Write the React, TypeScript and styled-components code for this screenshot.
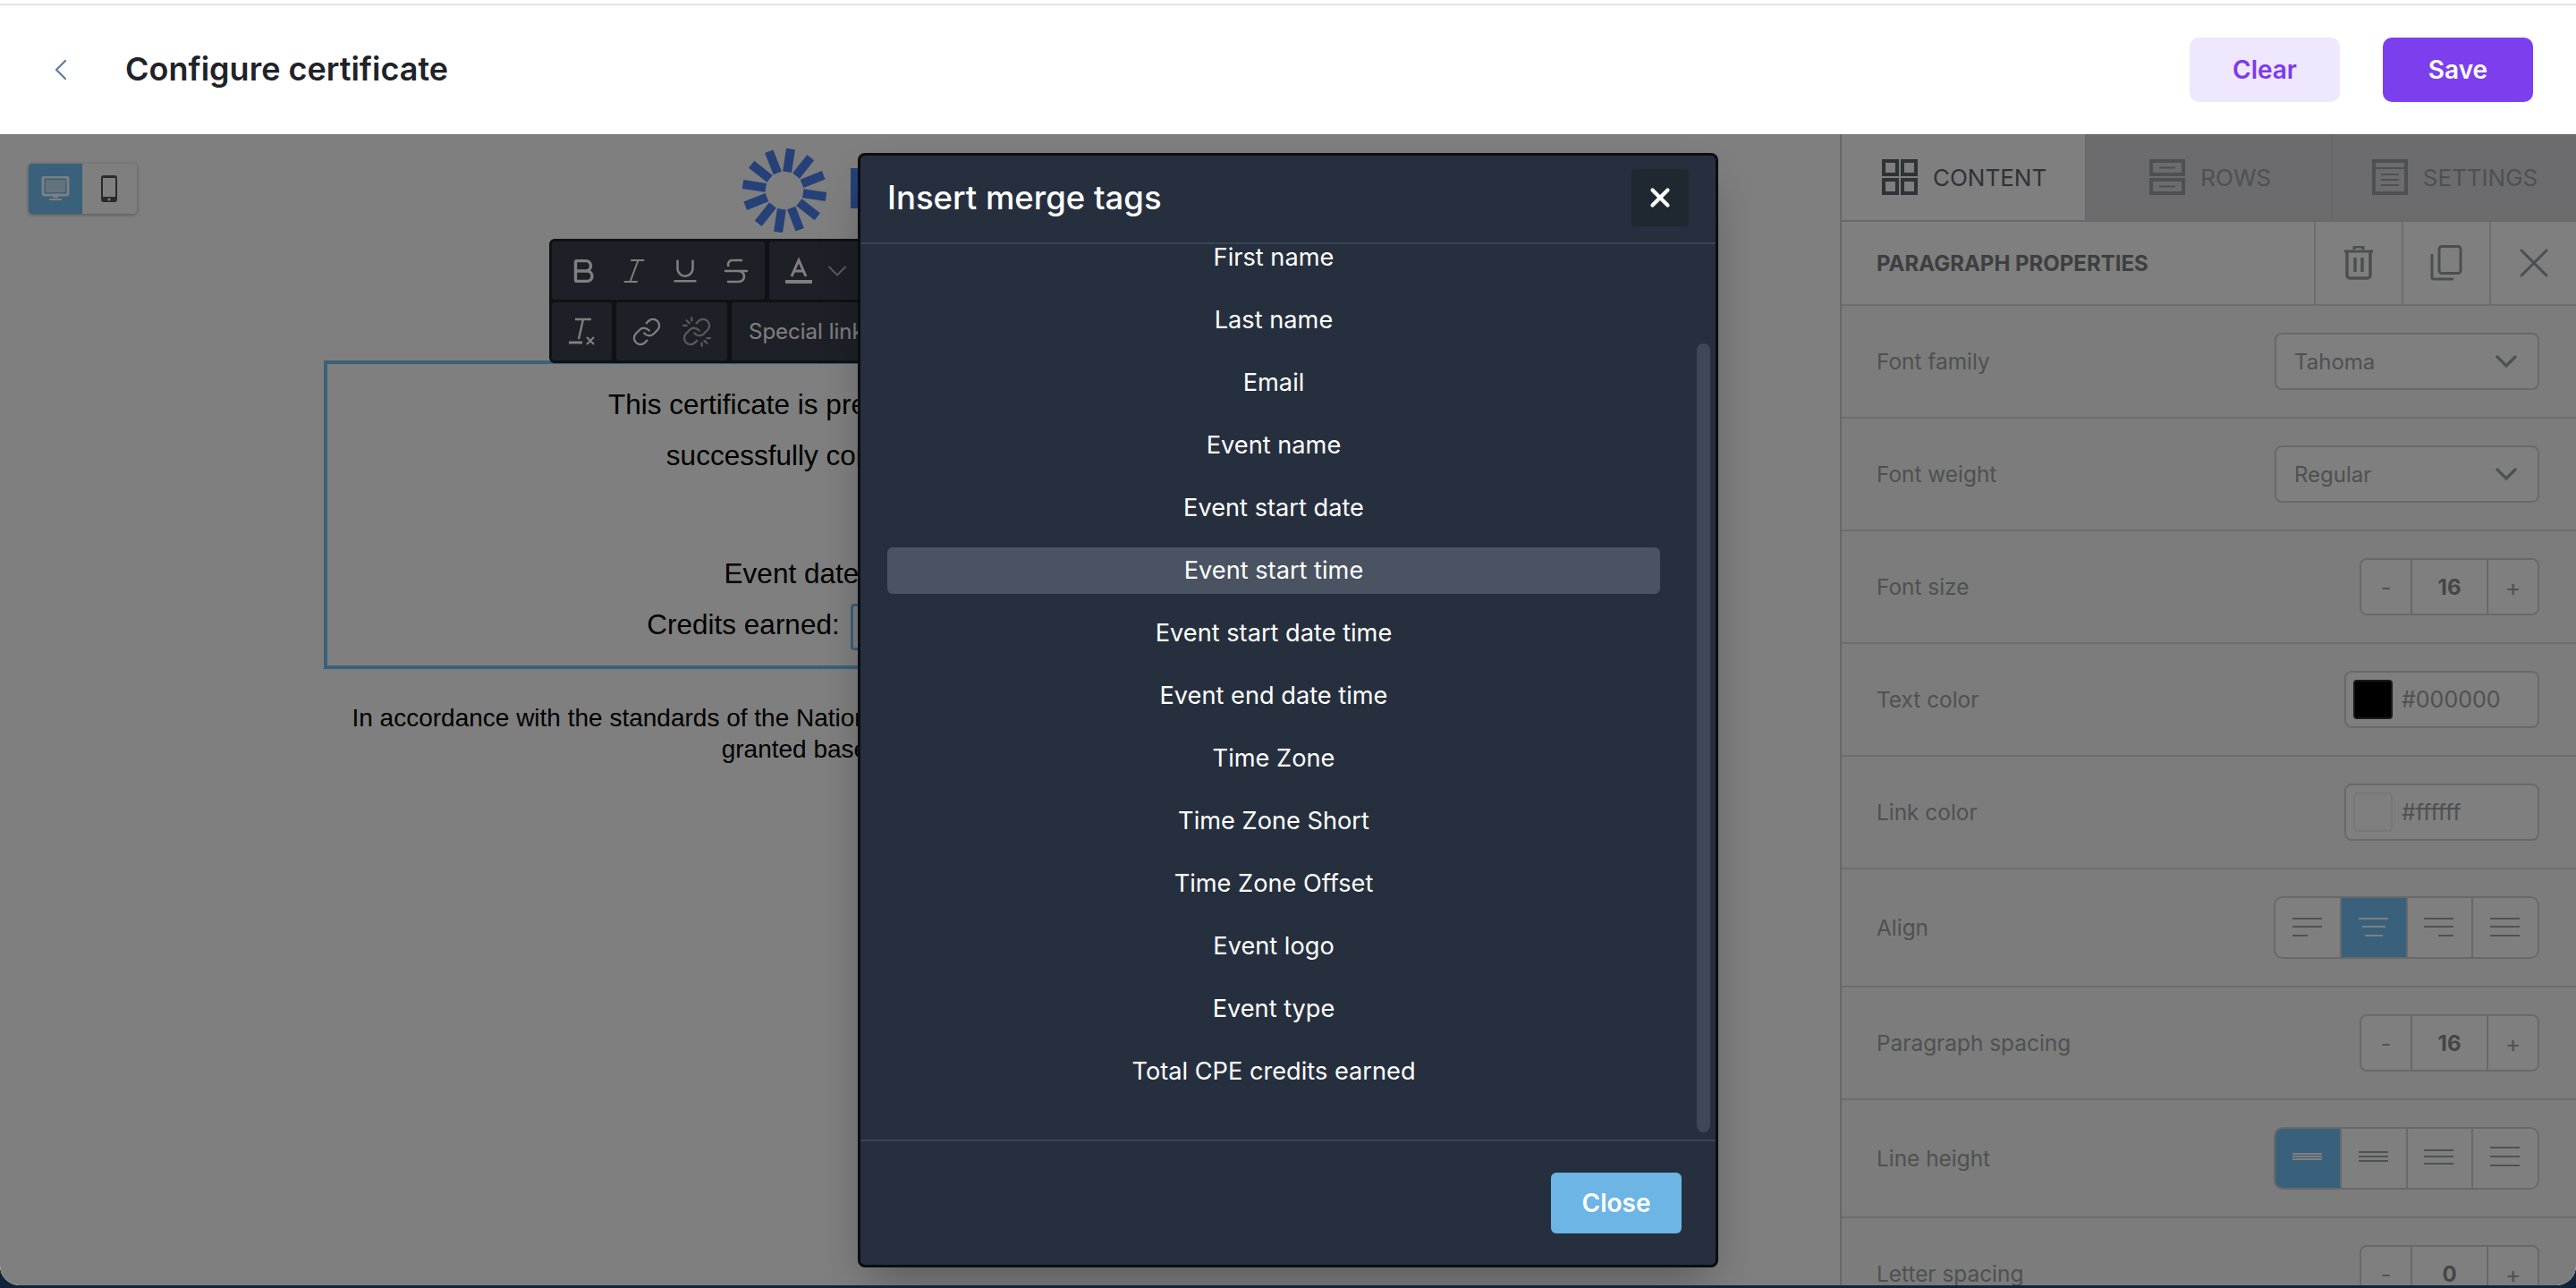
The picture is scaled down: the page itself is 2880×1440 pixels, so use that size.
import React from 'react';
import styled, { createGlobalStyle } from 'styled-components';
import { Bold, Italic, Underline, Strikethrough, ChevronDown, ChevronLeft, Link, X } from 'lucide-react';

const Global = createGlobalStyle`
  html, body { margin: 0; padding: 0; width: 2880px; height: 1440px; overflow: hidden; background: #11253a; }
  * { box-sizing: border-box; }
  body { font-family: Inter, "Liberation Sans", sans-serif; }
`;

const accent = '#72c2f6';
const line = '#d8dadb';
const dimText = '#9ea2a3';

const Page = styled.div`
  width: 2880px; height: 1437px; display: flex; flex-direction: column;
  background: #fff; overflow: hidden; border-radius: 0 0 22px 22px;
`;
const TopBar = styled.header`
  flex: none; display: flex; align-items: center; padding: 0 48px;
  border-top: 2px solid #e4e4e4; margin-top: 4px; height: 146px;
`;
const BackButton = styled.span`display: flex; color: #5b7aa6; width: 92px;`;
const Title = styled.h1`margin: 0 0 3px; font-size: 36px; font-weight: 600; color: #1f2329; flex: 1;`;
const TopButton = styled.button<{ $primary?: boolean }>`
  width: 168px; height: 72px; border: 0; border-radius: 10px; font: 600 28px Inter, sans-serif;
  margin-left: 48px; color: ${p => (p.$primary ? '#fff' : '#7c3aed')};
  background: ${p => (p.$primary ? '#7c3fee' : '#efe7fc')};
`;
const Workspace = styled.div`flex: 1; min-height: 0; display: flex; position: relative; overflow: hidden;`;
const Canvas = styled.main`flex: 1; padding-top: 16px; position: relative; min-width: 0; background: #fff;`;
const Logo = styled.svg`display: block; margin: 0 auto 143px; width: 398px; height: 94px;`;
const DeviceSwitch = styled.div`
  position: absolute; left: 32px; top: 33px; width: 121px; height: 56px; display: flex; background: #fff;
  border-radius: 4px; overflow: hidden; box-shadow: 0 1px 4px rgba(0,0,0,.35);
`;
const DeviceCell = styled.span<{ $on?: boolean }>`
  width: 60px; display: flex; align-items: center; justify-content: center; background: ${p => (p.$on ? accent : 'transparent')};
`;
const Selected = styled.section`
  width: 1334px; margin: 0 auto; border: 4px solid ${accent}; padding: 17px 0 17px; text-align: center;
  font: 31.5px/57px "Liberation Sans", sans-serif; color: #000;
`;
const Para = styled.p<{ $gap?: number }>`margin: 0 0 ${p => p.$gap ?? 0}px;`;
const Chip = styled.span`
  display: inline-block; width: 383px; height: 52px; vertical-align: middle; border: 3px solid ${accent}; border-radius: 4px;
  margin-left: 12px; font-size: 28px; line-height: 46px;
`;
const Legal = styled.p`
  margin: 37px 0 0; text-align: center; font: 28px/35px "Liberation Sans", sans-serif; color: #000;
`;
const Toolbar = styled.div`
  position: absolute; left: 614px; top: 117px; width: 560px; height: 139px; padding: 3px; border-radius: 6px;
  background: #1e2228; display: flex; flex-direction: column; gap: 3px;
`;
const ToolRow = styled.div`display: flex; gap: 5px; height: 66px;`;
const ToolGroup = styled.div<{ $w: number; $pad?: number }>`
  width: ${p => p.$w}px; padding-left: ${p => p.$pad ?? 0}px; background: #3a424f; border-radius: 3px;
  display: flex; align-items: center; color: #fff; flex: none;
`;
const ToolSlot = styled.span<{ $w: number; $dim?: boolean }>`
  width: ${p => p.$w}px; display: flex; justify-content: center; align-items: center; flex: none; opacity: ${p => (p.$dim ? 0.6 : 1)};
  svg { flex: none; }
`;
const ToolText = styled.span`font-size: 24px; padding-left: 19px; white-space: nowrap;`;

const Panel = styled.aside`
  width: 823px; flex: none; border-left: 2px solid #cfd1d2; background: #f9f9f9; overflow: hidden; display: flex; flex-direction: column;
`;
const Tabs = styled.div`display: flex; height: 98px; flex: none; margin-right: -2px;`;
const Tab = styled.div<{ $on?: boolean; $pad: number }>`
  width: 275px; display: flex; align-items: center; padding-left: ${p => p.$pad}px; gap: 17px;
  background: ${p => (p.$on ? '#fff' : '#d8d9dc')};
  border-right: 2px solid ${p => (p.$on ? '#d0d2d3' : '#cbcdcf')};
  border-bottom: 2px solid #d0d2d3;
  color: ${p => (p.$on ? '#5c666e' : dimText)}; font-size: 26px;
`;
const TabIcon = styled.svg`width: 40px; height: 40px; flex: none;`;
const PropHeader = styled.div`
  height: 94px; flex: none; display: flex; align-items: stretch; justify-content: space-between; background: #fff;
  border-bottom: 2px solid ${line}; padding-left: 39px;
`;
const PropTitle = styled.h2`align-self: center; margin: 0; font-size: 24px; font-weight: 700; color: #7b7e80;`;
const PropActions = styled.div`display: flex;`;
const PropAction = styled.span<{ $w: number }>`
  width: ${p => p.$w}px; border-left: 2px solid ${line}; display: flex; align-items: center; justify-content: center; color: #9a9d9e;
`;
const Row = styled.div<{ $tall?: boolean }>`
  height: ${p => (p.$tall ? 132 : 126)}px; flex: none; display: flex; align-items: center; justify-content: space-between;
  padding: 0 41px 0 39px; border-bottom: 2px solid ${line};
`;
const Label = styled.span`font-size: 24.4px; color: ${dimText};`;
const Select = styled.div`
  width: 296px; height: 64px; border: 2px solid #d0d3d5; border-radius: 8px; display: flex; align-items: center;
  justify-content: space-between; padding: 0 15px 0 20px; font-size: 24px; color: ${dimText}; background: #fff;
`;
const Stepper = styled.div`
  width: 201px; height: 64px; border: 2px solid #d0d3d5; border-radius: 8px; display: flex; background: #fff; overflow: hidden;
`;
const StepBtn = styled.span`width: 55px; display: flex; align-items: center; justify-content: center; font-size: 26px; color: #a0a3a4;`;
const StepValue = styled.span`
  flex: 1; display: flex; align-items: center; justify-content: center; font-size: 24px; font-weight: 700; color: #8a8d8e;
  border-left: 2px solid #d0d3d5; border-right: 2px solid #d0d3d5;
`;
const ColorField = styled.div`
  width: 218px; height: 64px; border: 2px solid #d0d3d5; border-radius: 8px; display: flex; align-items: center; gap: 10px;
  padding-left: 8px; font-size: 25px; color: ${dimText}; background: #fff;
`;
const Swatch = styled.span<{ $c: string }>`
  width: 44px; height: 44px; border-radius: 4px; background: ${p => p.$c}; border: 2px solid ${p => (p.$c === '#000' ? '#333' : '#eee')};
`;
const Segments = styled.div`
  width: 297px; height: 70px; border: 2px solid #d0d3d5; border-radius: 10px; display: flex; overflow: hidden; background: #fff;
`;
const Segment = styled.span<{ $on?: boolean }>`
  flex: 1; display: flex; align-items: center; justify-content: center; color: ${p => (p.$on ? '#fff' : '#a0a3a4')};
  background: ${p => (p.$on ? accent : 'transparent')}; border-right: 2px solid #d0d3d5; margin: ${p => (p.$on ? '-2px 0' : '0')};
  &:last-child { border-right: 0; }
`;
const Overlay = styled.div`position: absolute; inset: 0; background: rgba(0,0,0,.5);`;
const Modal = styled.div`
  position: absolute; left: 959px; top: 21px; width: 962px; height: 1246px; background: #262f3e; border: 3px solid #0b0d10;
  border-radius: 8px; display: flex; flex-direction: column; color: #fff; box-shadow: 0 25px 50px -12px rgba(0,0,0,.3); overflow: hidden;
`;
const ModalHead = styled.div`
  height: 99px; flex: none; display: flex; align-items: center; justify-content: space-between; padding: 0 30px 3px;
  border-bottom: 2px solid #3a4454;
`;
const ModalTitle = styled.h3`margin: 0; font-size: 36.5px; font-weight: 500;`;
const CloseX = styled.span`
  width: 64px; height: 64px; border-radius: 4px; background: #1f2730; display: flex; align-items: center; justify-content: center;
`;
const ListWrap = styled.div`flex: 1; min-height: 0; overflow: hidden; position: relative; padding: 0 30px;`;
const List = styled.ul`list-style: none; margin: -11px 0 0; padding: 0; width: 864px; display: flex; flex-direction: column; gap: 18px;`;
const Item = styled.li<{ $on?: boolean }>`
  height: 52px; border-radius: 6px; display: flex; align-items: center; justify-content: center; font-size: 27.2px; padding-bottom: 2px;
  background: ${p => (p.$on ? '#4a5362' : 'transparent')};
`;
const ScrollThumb = styled.span`
  position: absolute; top: 111px; right: 6px; width: 15px; height: 882px; border-radius: 8px; background: #3e4858;
`;
const ModalFoot = styled.div`
  height: 140px; flex: none; border-top: 2px solid #3a4454; display: flex; align-items: flex-start; justify-content: flex-end;
  padding: 35px 38px 0 0;
`;
const CloseButton = styled.button`
  width: 146px; height: 68px; border: 0; border-radius: 6px; background: #6cb5e5; color: #fff; font: 600 28px Inter, sans-serif;
`;

const tags = ['First name','Last name','Email','Event name','Event start date','Event start time','Event start date time','Event end date time','Time Zone','Time Zone Short','Time Zone Offset','Event logo','Event type','Total CPE credits earned'];

const rays = Array.from({ length: 12 }, (_, i) => i * 30 + 8.5);

const LogoMark = () => (
  <Logo viewBox="0 0 398 94">
    <g transform="translate(47 47)">
      {rays.map(r => <rect key={r} x="-5" y="-47" width="10" height="26" fill="#4c80f0" transform={`rotate(${r})`} />)}
    </g>
    <rect x="121" y="22" width="40" height="45" fill="#4c80f0" />
  </Logo>
);

const Lines = ({ rows }: { rows: [number, number, number][] }) => (
  <svg width="34" height="34" viewBox="0 0 34 34">
    {rows.map(([x, w, y]) => <rect key={`${x}-${y}`} x={x} y={y} width={w} height="2" fill="currentColor" />)}
  </svg>
);
const alignIcons: [number, number, number][][] = [
  [[0,33,6],[0,33,15],[0,17,25]],
  [[0,33,6],[4,26,15],[7,20,25]],
  [[0,33,6],[0,33,15],[16,17,25]],
  [[0,33,6],[0,33,15],[0,33,25]],
];
const heightIcons: [number, number, number][][] = [
  [[0,33,11],[0,33,14],[0,33,17]],
  [[0,33,9],[0,33,14],[0,33,19]],
  [[0,33,7],[0,33,14],[0,33,22]],
  [[0,33,4],[0,33,14],[0,33,24]],
];

const Step = ({ v }: { v: number }) => (
  <Stepper><StepBtn>-</StepBtn><StepValue>{v}</StepValue><StepBtn>+</StepBtn></Stepper>
);

export default function App() {
  return (
    <Page>
      <Global />
      <TopBar>
        <BackButton><ChevronLeft size={40} strokeWidth={1.3} /></BackButton>
        <Title>Configure certificate</Title>
        <TopButton>Clear</TopButton>
        <TopButton $primary>Save</TopButton>
      </TopBar>
      <Workspace>
        <Canvas>
          <DeviceSwitch>
            <DeviceCell $on>
              <svg width="32" height="28" viewBox="0 0 32 28"><rect x="2" y="1" width="28" height="20" rx="2" fill="none" stroke="#fff" strokeWidth="3"/><rect x="5" y="4" width="22" height="14" fill="#fff" opacity=".6"/><path d="M13 21h6v3h-6zM9 25h14v2H9z" fill="#fff"/></svg>
            </DeviceCell>
            <DeviceCell>
              <svg width="20" height="32" viewBox="0 0 20 32"><rect x="1" y="1" width="18" height="30" rx="3" fill="#555"/><rect x="3" y="4" width="14" height="21" fill="#fff"/><circle cx="10" cy="28" r="1.5" fill="#fff"/></svg>
            </DeviceCell>
          </DeviceSwitch>
          <LogoMark />
          <Selected>
            <Para>This certificate is presented to Attendee Name for.</Para>
            <Para $gap={75}>successfully completing Event names on</Para>
            <Para>Event date: Event day and time</Para>
            <Para>Credits earned:<Chip>Total CPE credits</Chip></Para>
          </Selected>
          <Legal>
            In accordance with the standards of the National Registry of CPE Sponsors, all CPE credits have been<br />
            granted based on a 50-minute hour.
          </Legal>
          <Toolbar>
            <ToolRow>
              <ToolGroup $w={238} $pad={6}>
                <ToolSlot $w={57}><Bold size={34} strokeWidth={2.4} /></ToolSlot>
                <ToolSlot $w={57}><Italic size={36} strokeWidth={1.3} /></ToolSlot>
                <ToolSlot $w={57}><Underline size={34} strokeWidth={1.8} /></ToolSlot>
                <ToolSlot $w={57}><Strikethrough size={36} strokeWidth={1.7} /></ToolSlot>
              </ToolGroup>
              <ToolGroup $w={240}>
                <ToolSlot $w={66}>
                  <svg width="32" height="32" viewBox="0 0 32 32"><path d="M8 22 16 4l8 18M11 16h10" fill="none" stroke="currentColor" strokeWidth="3"/><rect x="1" y="26" width="30" height="4" fill="currentColor"/></svg>
                </ToolSlot>
                <ToolSlot $w={20} $dim><ChevronDown size={36} strokeWidth={1.4} /></ToolSlot>
              </ToolGroup>
            </ToolRow>
            <ToolRow>
              <ToolGroup $w={67}>
                <ToolSlot $w={67}>
                  <svg width="30" height="32" viewBox="0 0 30 32"><path d="M7 2h18M16 2l-5 22" fill="none" stroke="currentColor" strokeWidth="2.4"/><path d="M0 28h15" stroke="currentColor" strokeWidth="3"/><path d="M20 22l8 8M28 22l-8 8" stroke="currentColor" strokeWidth="2.2"/></svg>
                </ToolSlot>
              </ToolGroup>
              <ToolGroup $w={124} $pad={6}>
                <ToolSlot $w={56}><Link size={34} strokeWidth={1.6} /></ToolSlot>
                <ToolSlot $w={56} $dim>
                  <svg width="34" height="34" viewBox="0 0 24 24" fill="none" stroke="currentColor" strokeWidth="1.6" strokeLinecap="round"><path d="M10 13a5 5 0 0 0 7.54.54l3-3a5 5 0 0 0-7.07-7.07l-1.72 1.71" /><path d="M14 11a5 5 0 0 0-7.54-.54l-3 3a5 5 0 0 0 7.07 7.07l1.71-1.71" /><path d="M4 3l2 2M1.5 7h2.5M8 .8v2.4M20 21l-2-2M22.5 17H20M16 23.2v-2.4" /></svg>
                </ToolSlot>
              </ToolGroup>
              <ToolGroup $w={300}><ToolText>Special links</ToolText></ToolGroup>
            </ToolRow>
          </Toolbar>
        </Canvas>
        <Panel>
          <Tabs>
            <Tab $on $pad={45}>
              <TabIcon viewBox="0 0 40 40"><g fill="none" stroke="currentColor" strokeWidth="4"><rect x="2" y="2" width="15" height="15"/><rect x="23" y="2" width="15" height="15"/><rect x="2" y="23" width="15" height="15"/><rect x="23" y="23" width="15" height="15"/></g></TabIcon>
              <span>CONTENT</span>
            </Tab>
            <Tab $pad={70}>
              <TabIcon viewBox="0 0 40 40"><g fill="none" stroke="currentColor" strokeWidth="4"><rect x="2" y="2" width="36" height="15"/><rect x="2" y="23" width="36" height="15"/></g><path d="M11 9.5h18M11 30.5h18" stroke="currentColor" strokeWidth="2"/></TabIcon>
              <span>ROWS</span>
            </Tab>
            <Tab $pad={44}>
              <TabIcon viewBox="0 0 40 40"><rect x="2" y="2" width="36" height="36" fill="none" stroke="currentColor" strokeWidth="4"/><path d="M2 10h36M10 17h20M10 23h20M10 29h20" stroke="currentColor" strokeWidth="2"/></TabIcon>
              <span>SETTINGS</span>
            </Tab>
          </Tabs>
          <PropHeader>
            <PropTitle>PARAGRAPH PROPERTIES</PropTitle>
            <PropActions>
              <PropAction $w={98}>
                <svg width="34" height="38" viewBox="0 0 34 38"><path d="M1 6h32M12 4V1h10v3" fill="none" stroke="currentColor" strokeWidth="3"/><path d="M4 7v26a3 3 0 0 0 3 3h20a3 3 0 0 0 3-3V7" fill="none" stroke="currentColor" strokeWidth="3.5"/><path d="M13 13v16M21 13v16" stroke="currentColor" strokeWidth="3.5"/></svg>
              </PropAction>
              <PropAction $w={98}>
                <svg width="36" height="40" viewBox="0 0 36 40"><rect x="10" y="1.5" width="24" height="30" rx="3" fill="none" stroke="currentColor" strokeWidth="3"/><path d="M2 10v26a2 2 0 0 0 2 2h22" fill="none" stroke="currentColor" strokeWidth="3"/></svg>
              </PropAction>
              <PropAction $w={97}><X size={56} strokeWidth={1.3} /></PropAction>
            </PropActions>
          </PropHeader>
          <Row><Label>Font family</Label><Select>Tahoma<ChevronDown size={40} strokeWidth={2} /></Select></Row>
          <Row><Label>Font weight</Label><Select>Regular<ChevronDown size={40} strokeWidth={2} /></Select></Row>
          <Row><Label>Font size</Label><Step v={16} /></Row>
          <Row><Label>Text color</Label><ColorField><Swatch $c="#000" />#000000</ColorField></Row>
          <Row><Label>Link color</Label><ColorField><Swatch $c="#ffffff" />#ffffff</ColorField></Row>
          <Row $tall>
            <Label>Align</Label>
            <Segments>{alignIcons.map((r, i) => <Segment key={i} $on={i === 1}><Lines rows={r} /></Segment>)}</Segments>
          </Row>
          <Row><Label>Paragraph spacing</Label><Step v={16} /></Row>
          <Row $tall>
            <Label>Line height</Label>
            <Segments>{heightIcons.map((r, i) => <Segment key={i} $on={i === 0}><Lines rows={r} /></Segment>)}</Segments>
          </Row>
          <Row><Label>Letter spacing</Label><Step v={0} /></Row>
        </Panel>
        <Overlay />
        <Modal>
          <ModalHead>
            <ModalTitle>Insert merge tags</ModalTitle>
            <CloseX><X size={34} strokeWidth={3} /></CloseX>
          </ModalHead>
          <ListWrap>
            <List>{tags.map(t => <Item key={t} $on={t === 'Event start time'}>{t}</Item>)}</List>
            <ScrollThumb />
          </ListWrap>
          <ModalFoot><CloseButton>Close</CloseButton></ModalFoot>
        </Modal>
      </Workspace>
    </Page>
  );
}
